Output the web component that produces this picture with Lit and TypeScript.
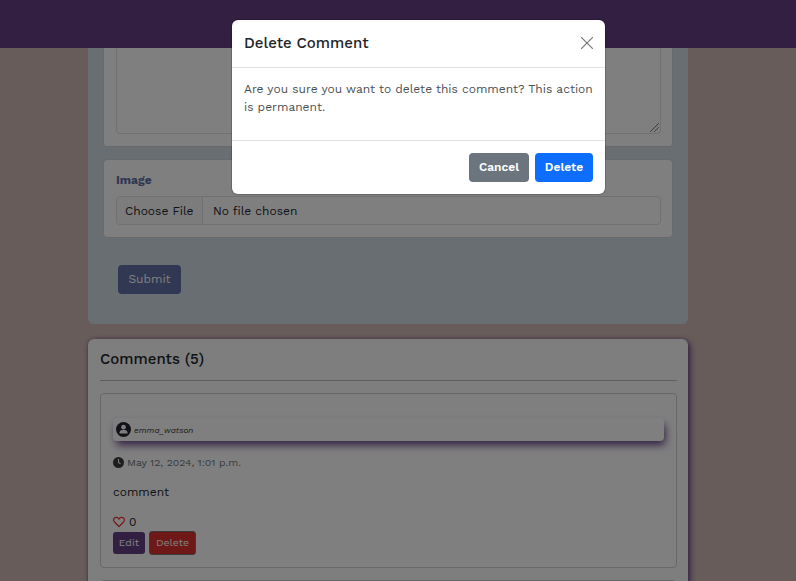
import { LitElement, html, css, nothing } from "lit";
import { customElement, property } from "lit/decorators.js";

const controls = css`
  * { box-sizing: border-box; }
  .btn { border: 0; border-radius: 4px; color: #fff; font: inherit; padding: 0 0 1px; display: inline-flex; align-items: center; justify-content: center; white-space: nowrap; }
`;

@customElement("post-form")
class PostForm extends LitElement {
  static styles = [controls, css`
    :host { display: block; height: 276px; background: #d3dde6; border-radius: 0 0 6px 6px; padding: 0 15px; overflow: hidden; }
    .card { background: #fff; border: 1px solid #d0d2d4; border-radius: 4px; padding: 0 11px 12px 12px; }
    .first { border-top: 0; border-radius: 0 0 4px 4px; height: 99px; margin-bottom: 12px; }
    .area { position: relative; height: 86px; border: 1px solid #dee2e6; border-top: 0; border-radius: 0 0 4px 4px; }
    .grip { position: absolute; right: 1px; bottom: 1px; width: 9px; height: 9px; display: block; }
    .second { height: 79px; }
    .label { font-weight: 700; color: #5f6fa5; line-height: 18px; padding-top: 11px; margin-bottom: 7px; }
    .file { display: flex; height: 29px; border: 1px solid #dee2e6; border-radius: 4px; line-height: 28px; color: #212529; overflow: hidden; }
    .choose { width: 86px; padding-left: 8px; background: #f8f9fa; border-right: 1px solid #dee2e6; white-space: nowrap; }
    .name { padding-left: 10px; }
    .submit { width: 63px; height: 29px; background: #6070a6; margin: 27px 0 0 15px; }
  `];
  render() {
    return html`
      <div class="card first"><div class="area">
        <svg class="grip" viewBox="0 0 9 9"><path d="M.5 8.5l8-8M4.5 8.5l4-4" stroke="#333" stroke-width="1" stroke-dasharray="1.2 .3" fill="none"/></svg>
      </div></div>
      <div class="card second">
        <div class="label">Image</div>
        <div class="file"><span class="choose">Choose File</span><span class="name">No file chosen</span></div>
      </div>
      <button class="btn submit">Submit</button>`;
  }
}

@customElement("comment-card")
class CommentCard extends LitElement {
  @property() author = "";
  @property() date = "";
  @property() text = "";
  @property({ type: Number }) likes = 0;
  static styles = [controls, css`
    :host { display: block; box-sizing: border-box; height: 175px; border: 1px solid #d0d0d0; border-radius: 4px; background: #fff; padding: 24px 12px 0; }
    .user { display: flex; align-items: center; height: 23px; gap: 3px; padding-left: 3px; border-radius: 4px; background: #fff; box-shadow: 2px 5px 8px -1px #643e85; font-size: 8.4px; font-style: italic; color: #333; }
    svg { display: block; flex: none; }
    .name { padding-top: 1px; }
    .date { display: flex; align-items: center; gap: 3px; font-size: 10.5px; line-height: 16px; margin-top: 13px; color: #6c757d; }
    .when { padding-top: 1px; margin-bottom: -1px; }
    .text { line-height: 18px; margin-top: 13px; }
    .likes { display: flex; align-items: center; gap: 4px; line-height: 18px; margin-top: 12px; }
    .actions { display: flex; align-items: center; gap: 4px; font-size: 10.5px; }
    .edit { width: 32px; height: 22px; background: #643e85; border-radius: 3px; }
    .delete { width: 47px; height: 24px; background: #dc3030; border: 1px solid #777; border-radius: 3px; }
  `];
  render() {
    if (!this.author) return nothing;
    return html`
      <div class="user">
        <svg width="15" height="15" viewBox="0 0 16 16"><circle cx="8" cy="8" r="8" fill="#22252e"/><circle cx="8" cy="5.5" r="2.5" fill="#fff"/><path d="M3.600 12.300c0-2.600 1.500-3.700 3-3.700h2.800c1.500 0 3 1.100 3 3.700z" fill="#fff"/></svg>
        <span class="name">${this.author}</span>
      </div>
      <div class="date">
        <svg width="11" height="11" viewBox="0 0 16 16"><circle cx="8" cy="8" r="8" fill="#3d3d3d"/><path d="M8 3v5l3 2" stroke="#fff" stroke-width="1.5" fill="none"/></svg>
        <span class="when">${this.date}</span>
      </div>
      <div class="text">${this.text}</div>
      <div class="likes">
        <svg width="12" height="12" viewBox="0 0 16 16"><path d="M8 14.2L2 8C.4 6.2.5 3.9 2 2.7c1.800-1.400 4.100-.9 5.300.6L8 4.100l.7-.8c1.200-1.500 3.500-2 5.300-.6 1.500 1.200 1.600 3.500 0 5.300z" fill="none" stroke="#f01c1c" stroke-width="1.5" stroke-linejoin="round"/></svg>
        <span>${this.likes}</span>
      </div>
      <div class="actions"><button class="btn edit">Edit</button><button class="btn delete">Delete</button></div>`;
  }
}

@customElement("confirm-dialog")
class ConfirmDialog extends LitElement {
  static styles = [controls, css`
    :host { display: block; box-sizing: border-box; width: 373px; height: 174px; background: #fff; border-radius: 6px; box-shadow: 0 0 0 1px rgba(0,0,0,.18); color: #212529; }
    .head { display: flex; justify-content: space-between; align-items: center; height: 48px; padding: 0 12px 1px; border-bottom: 1px solid #dee2e6; }
    .title { font-size: 15px; font-weight: 500; }
    .close { display: block; }
    .body { height: 72px; padding: 12px; line-height: 18px; color: #4a4f54; white-space: nowrap; }
    .foot { display: flex; justify-content: flex-end; gap: 6px; height: 54px; padding: 12px; border-top: 1px solid #dee2e6; font-weight: 600; }
    .cancel { width: 60px; height: 29px; background: #6c757d; }
    .delete { width: 58px; height: 29px; background: #0d6efd; }
  `];
  render() {
    return html`
      <div class="head"><span class="title">Delete Comment</span>
        <svg class="close" width="12" height="12" viewBox="0 0 12 12"><path d="M.6.6l10.800 10.800M11.400.6L.6 11.400" stroke="#7a7a7a" stroke-width="1.3" stroke-linecap="round"/></svg></div>
      <div class="body">Are you sure you want to delete this comment? This action<br>is permanent.</div>
      <div class="foot"><button class="btn cancel">Cancel</button><button class="btn delete">Delete</button></div>`;
  }
}

@customElement("app-root")
class AppRoot extends LitElement {
  static styles = css`
    * { box-sizing: border-box; }
    :host { display: block; position: relative; height: 581px; overflow: hidden; background: #cfb9b3; font: 12px "Work Sans", Inter, sans-serif; color: #212529; }
    .nav { height: 48px; background: #643e85; }
    .column { width: 600px; margin-left: 88px; }
    .comments { margin-top: 15px; height: 420px; background: #fcfcfc; border-radius: 6px; padding: 0 11px 0 12px; box-shadow: 2px 2px 6px 0 #643e85, 0 0 3px rgba(100,62,133,.4); }
    .heading { font-size: 15px; font-weight: 500; height: 42px; line-height: 40px; border-bottom: 1px solid #bebebe; margin-bottom: 12px; }
    .next { margin-top: 12px; }
    .overlay { position: absolute; inset: 0; background: rgba(0,0,0,.5); display: flex; justify-content: flex-start; align-items: flex-start; padding: 20px 0 0 232px; }
  `;
  render() {
    return html`
      <div class="nav"></div>
      <div class="column">
        <post-form></post-form>
        <section class="comments">
          <div class="heading">Comments (5)</div>
          <comment-card author="emma_watson" date="May 12, 2024, 1:01 p.m." text="comment"></comment-card>
          <comment-card class="next"></comment-card>
        </section>
      </div>
      <div class="overlay"><confirm-dialog></confirm-dialog></div>`;
  }
}
